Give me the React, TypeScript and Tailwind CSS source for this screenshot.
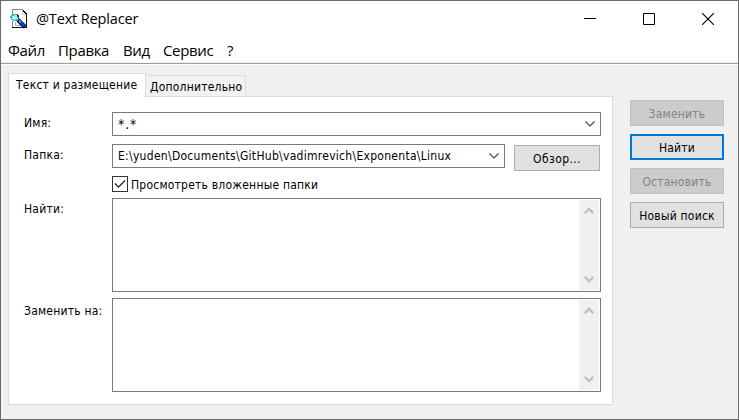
import type { ReactNode } from "react";

function AppIcon() {
  return (
    <svg width="18" height="20" viewBox="0 0 18 20" shapeRendering="crispEdges">
      <path d="M3 1h9l4 4v13H3z" fill="#fff" />
      <path d="M2 0h11v1H3v5H2zM2 12h1v6H2z" fill="#858585" />
      <path d="M12 1h1v4h3v1h-4z" fill="#c9c9c9" />
      <path d="M13 1h1v1h1v1h1v1h1v15H2v-1h14V5h-1V4h-1V3h-1z" fill="#111" />
      <path d="M5 13h1v3h5v1H5z" fill="#b5b5b5" />
      <path d="M8 11l7 7" stroke="#000" strokeWidth="4.200" shapeRendering="auto" />
      <path d="M9 11.500l5.500 6" stroke="#0a3cf0" strokeWidth="2.600" shapeRendering="auto" />
      <path d="M9 11.500l2 2" stroke="#20d8f0" strokeWidth="1.500" />
      <path d="M1 6h2V5h4v1h1v5H7v1H3v-1H1V9H0V7h1z" fill="#3fb9bd" />
      <path d="M2 7h2V6h3v2h1v2H6v1H3v-1H2z" fill="#7ff4f4" />
      <path d="M3 7h2v1h1v1H4v1H3z" fill="#e4ffff" />
      <path d="M7 5h1v1h1v4H8V8H7z" fill="#17484b" />
    </svg>
  );
}

function Chevron() {
  return (
    <svg width="10" height="6" viewBox="0 0 10 6" fill="none" stroke="#444" strokeWidth="1.1">
      <path d="M0.500 0.500L5 5L9.500 0.500" />
    </svg>
  );
}

function ScrollArrow({ down = false }: { down?: boolean }) {
  return (
    <svg width="10" height="8" viewBox="0 0 10 8" fill="none" stroke="#bfbfbf" strokeWidth="2.200" className={down ? "rotate-180" : ""}>
      <path d="M0.700 6.200L5 1.900L9.300 6.200" />
    </svg>
  );
}

function TextBox() {
  return (
    <div className="flex h-[94px] w-[489px] justify-end border border-[#7a7a7a] bg-white py-px pr-px">
      <div className="flex w-5 flex-col items-center justify-between bg-[#f0f0f0] pt-[7px] pr-px pb-[7px]">
        <ScrollArrow />
        <ScrollArrow down />
      </div>
    </div>
  );
}

function Label({ children, className = "" }: { children: ReactNode; className?: string }) {
  return <span className={`block w-[88px] shrink-0 whitespace-nowrap leading-4 ${className}`}>{children}</span>;
}

function Button({ children, className }: { children: ReactNode; className: string }) {
  return <button className={`flex h-[26px] items-center justify-center whitespace-nowrap pt-px ${className}`}>{children}</button>;
}

export default function App() {
  return (
    <div className="flex h-[420px] w-[739px] flex-col overflow-hidden border border-[#6b6b6b] bg-[#f0f0f0] font-['DejaVu_Sans_Condensed','DejaVu_Sans',sans-serif] text-[12px] tracking-[0.22px] text-black [font-stretch:condensed]">
      <header className="flex h-[61px] shrink-0 flex-col bg-white font-['Open_Sans',sans-serif] tracking-normal [font-stretch:normal]">
        <div className="flex h-[36px] items-center justify-between pl-[9px]">
          <div className="flex items-center gap-[8px]">
            <AppIcon />
            <span className="text-[14.5px] leading-5 tracking-[-0.15px]">@Text Replacer</span>
          </div>
          <div className="flex items-center gap-[47px] pr-[24px]">
            <svg width="12" height="12"><path d="M0 5.500h12" stroke="#000" /></svg>
            <svg width="12" height="12"><path d="M.5.5h11v11H.5z" fill="none" stroke="#000" /></svg>
            <svg width="12" height="12"><path d="M0 0l12 12M12 0L0 12" stroke="#000" strokeWidth="1.100" /></svg>
          </div>
        </div>
        <nav className="flex h-[25px] pl-[7px] text-[15px] leading-[27px] tracking-[-0.35px]">
          <span className="w-[50px]">Файл</span>
          <span className="w-[65px]">Правка</span>
          <span className="w-[40px]">Вид</span>
          <span className="w-[64px]">Сервис</span>
          <span>?</span>
        </nav>
      </header>
      <div className="h-[3px] shrink-0 border-y border-t-[#f0f0f0] border-b-white bg-[#a0a0a0]" />
      <main className="flex flex-1 gap-[17px] pt-[8px] pl-[7px]">
        <div className="flex w-[605px] flex-col">
          <div className="flex h-[23px] items-end">
            <div className="z-10 -mb-px h-[24px] w-[138px] whitespace-nowrap border border-b-0 border-[#dcdcdc] bg-white pl-[7px] leading-[23px]">Текст и размещение</div>
            <div className="h-[21px] w-[100px] whitespace-nowrap border border-b-0 border-l-0 border-[#dcdcdc] bg-[#f2f2f2] pl-[4px] leading-[22px]">Дополнительно</div>
          </div>
          <section className="flex h-[309px] flex-col border border-[#dcdcdc] bg-white pt-[15px] pl-[15px]">
            <div className="flex h-[32px]">
              <Label className="pt-[3px]">Имя:</Label>
              <div className="flex h-6 w-[489px] items-center justify-between border border-[#7a7a7a] pr-[5px] pl-[5px]">
                <span className="text-[14px] leading-4 tracking-[0.9px]">*.*</span>
                <Chevron />
              </div>
            </div>
            <div className="flex h-[32px]">
              <Label className="pt-[3px]">Папка:</Label>
              <div className="flex h-6 w-[393px] items-center justify-between border border-[#7a7a7a] pr-[5px] pl-[5px]">
                <span className="whitespace-nowrap leading-4 tracking-[0.285px]">E:\yuden\Documents\GitHub\vadimrevich\Exponenta\Linux</span>
                <Chevron />
              </div>
              <Button className="mt-px ml-[9px] w-[86px] border border-[#adadad] bg-[#e1e1e1] tracking-[0.4px]">Обзор...</Button>
            </div>
            <div className="flex h-[22px] pl-[88px]">
              <div className="flex size-4 items-center justify-center border border-[#333]">
                <svg width="12" height="10" fill="none" stroke="#333" strokeWidth="1.500"><path d="M1 4.500L4.500 8L11 1.500" /></svg>
              </div>
              <span className="pl-[3px] leading-[18px]">Просмотреть вложенные папки</span>
            </div>
            <div className="flex h-[100px]">
              <Label className="pt-[3px]">Найти:</Label>
              <TextBox />
            </div>
            <div className="flex">
              <Label className="pt-[5px]">Заменить на:</Label>
              <TextBox />
            </div>
          </section>
        </div>
        <aside className="flex w-[94px] flex-col gap-2 pt-[27px]">
          <Button className="border border-[#bfbfbf] bg-[#cccccc] text-[#838383]">Заменить</Button>
          <Button className="border-2 border-[#0078d7] bg-[#e1e1e1]">Найти</Button>
          <Button className="border border-[#bfbfbf] bg-[#cccccc] text-[#838383]">Остановить</Button>
          <Button className="border border-[#adadad] bg-[#e1e1e1]">Новый поиск</Button>
        </aside>
      </main>
    </div>
  );
}
